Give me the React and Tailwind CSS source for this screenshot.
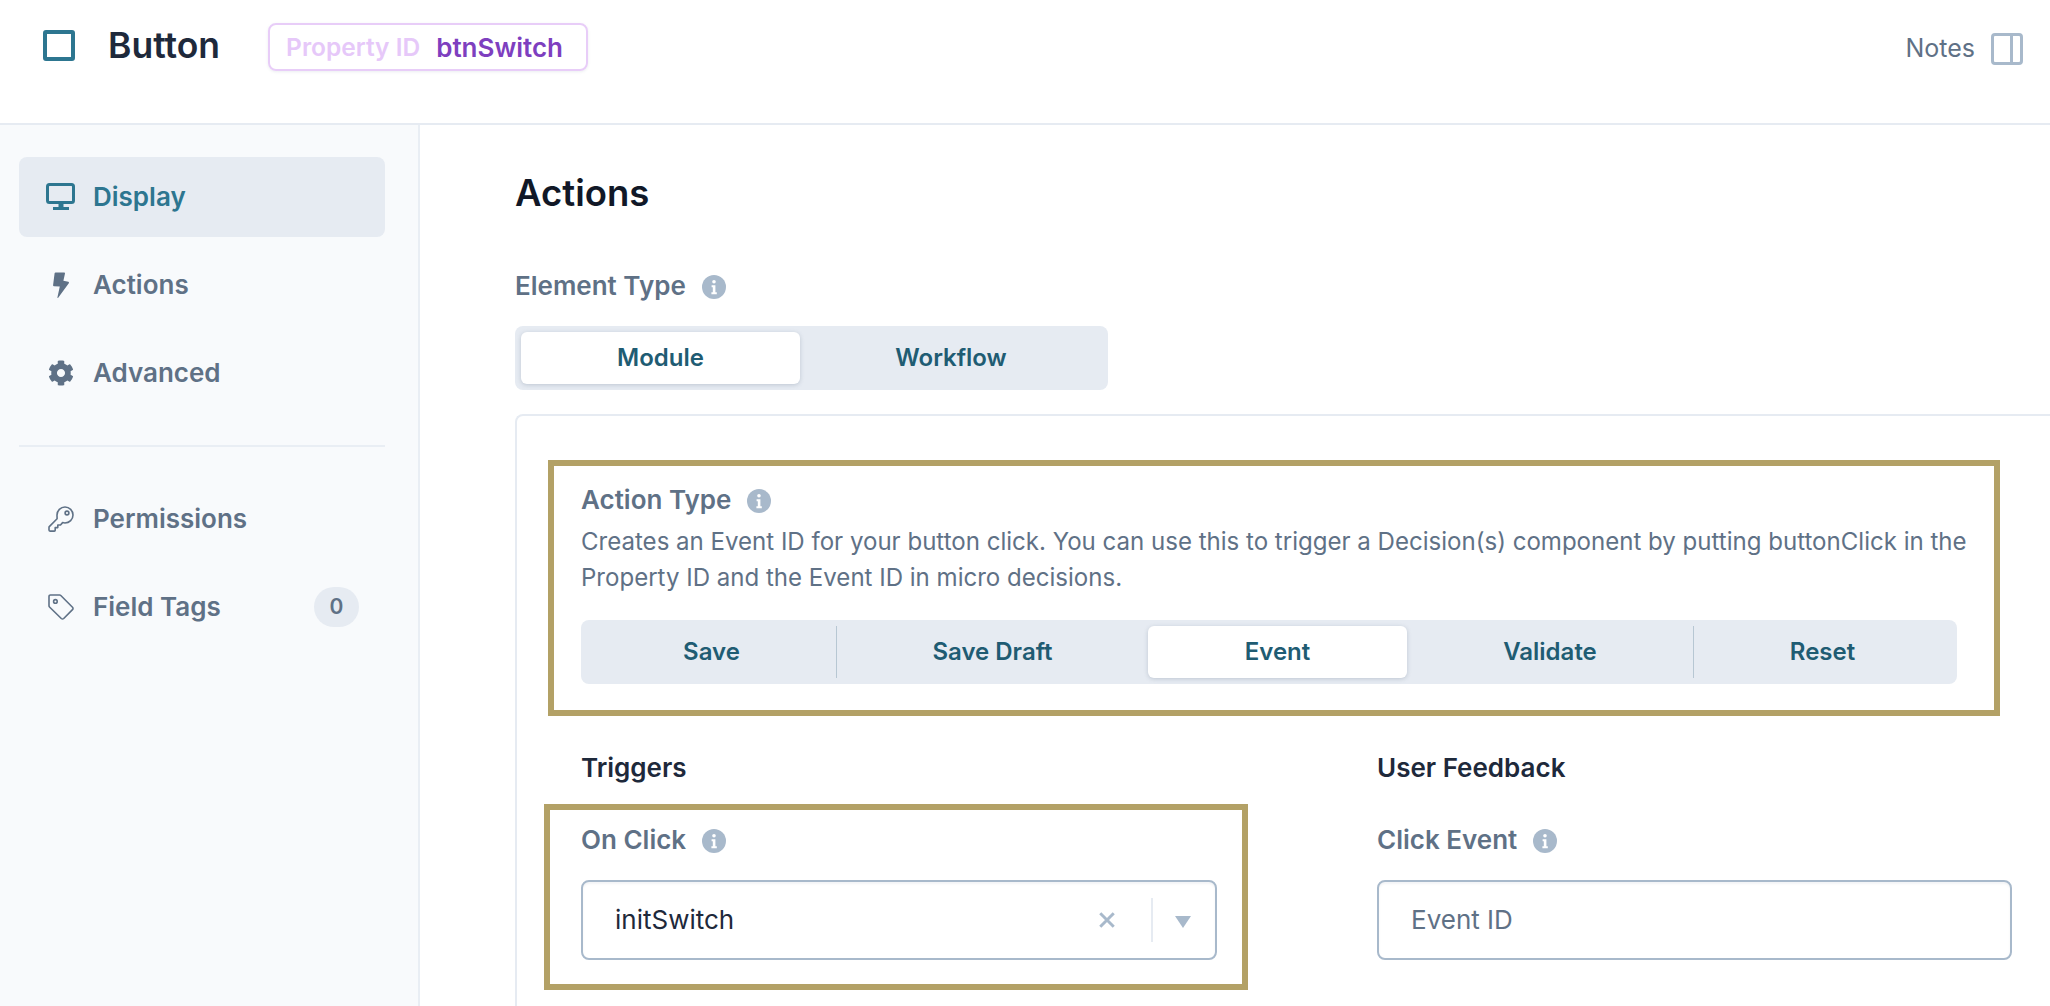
const FONT = "font-['Inter','Liberation_Sans',sans-serif]";

function Info() {
  return (
    <svg viewBox="0 0 24 24" className="w-6 h-6 shrink-0 mt-[2px]">
      <circle cx="12" cy="12" r="12" fill="#a8b9cb" />
      <circle cx="12" cy="6.8" r="1.8" fill="#fff" />
      <path d="M9.6 10.2h3.8v7h1.4v2H9.4v-2h1.4v-5H9.6z" fill="#fff" />
    </svg>
  );
}

function Monitor() {
  return (
    <svg viewBox="0 0 30 28" className="w-[30px] h-[28px]" fill="none" stroke="#2d7690">
      <rect x="1.5" y="1.5" width="26" height="18" rx="2" strokeWidth="3" />
      <path d="M15 20v5" strokeWidth="5" />
      <path d="M7 25.5h16" strokeWidth="3" />
    </svg>
  );
}

function Bolt() {
  return (
    <svg viewBox="0 0 16 26" className="w-[16px] h-[26px]" fill="#5f7186">
      <path d="M2.6 0.4h8.4c.7 0 1.1.5 1 1.2L10.4 8.8l4.9 1c.6.1.9.8.5 1.4L5.2 25.8c-.3.4-.9.2-.8-.3L6.8 14.6 1 14.2c-.7 0-1-.5-.9-1.1L1.6 1.2c.1-.5.5-.8 1-.8z" />
    </svg>
  );
}

function Gear() {
  return (
    <svg viewBox="0 0 512 512" className="w-[26px] h-[26px]" fill="#5f7186">
      <path d="M487.4 315.7l-42.6-24.6c4.3-23.2 4.3-47 0-70.2l42.6-24.6c4.9-2.8 7.1-8.6 5.5-14-11.1-35.6-30-67.8-54.7-94.6-3.8-4.1-10-5.1-14.8-2.3L380.8 110c-17.9-15.4-38.5-27.3-60.8-35.1V25.8c0-5.6-3.9-10.5-9.4-11.7-36.7-8.2-74.3-7.8-109.2 0-5.5 1.2-9.4 6.1-9.4 11.7V75c-22.2 7.9-42.8 19.8-60.8 35.1L88.7 85.5c-4.9-2.8-11-1.9-14.8 2.3-24.7 26.7-43.6 58.9-54.7 94.6-1.7 5.4.6 11.2 5.5 14L67.3 221c-4.3 23.2-4.3 47 0 70.2l-42.6 24.6c-4.9 2.8-7.1 8.6-5.5 14 11.1 35.6 30 67.8 54.7 94.6 3.8 4.1 10 5.1 14.8 2.3l42.6-24.6c17.9 15.4 38.5 27.3 60.8 35.1v49.2c0 5.6 3.9 10.5 9.4 11.7 36.7 8.2 74.3 7.8 109.2 0 5.5-1.2 9.4-6.1 9.4-11.7v-49.2c22.2-7.9 42.8-19.8 60.8-35.1l42.6 24.6c4.9 2.8 11 1.9 14.8-2.3 24.7-26.7 43.6-58.9 54.7-94.6 1.5-5.5-.7-11.3-5.6-14.1zM256 336c-44.1 0-80-35.9-80-80s35.9-80 80-80 80 35.9 80 80-35.9 80-80 80z" />
    </svg>
  );
}

function Key() {
  return (
    <svg viewBox="0 0 26 26" className="w-[26px] h-[26px]" fill="none" stroke="#5f7186" strokeWidth="1.6" strokeLinejoin="round">
      <path d="M17 1c4.4 0 8 3.6 8 8s-3.6 8-8 8c-.8 0-1.6-.1-2.4-.4l-2.1 2.4H9.8v2.6H7.2v2.6c0 .5-.4.9-.9.9H2c-.5 0-1-.4-1-1v-2.8c0-.3.1-.5.3-.7l7.8-7.8C9.1 11 9 10 9 9c0-4.4 3.6-8 8-8z" />
      <circle cx="19" cy="7" r="1.9" />
    </svg>
  );
}

function Tag() {
  return (
    <svg viewBox="0 0 26 26" className="w-[26px] h-[26px]" fill="none" stroke="#5f7186" strokeWidth="1.6" strokeLinejoin="round">
      <path d="M2.4 1h9.2c.5 0 .9.2 1.2.5l11.7 11.7c.7.7.7 1.7 0 2.4l-8.8 8.9c-.7.6-1.7.6-2.4 0L1.5 13c-.3-.3-.5-.7-.5-1.2V2.4C1 1.6 1.6 1 2.4 1z" />
      <circle cx="7.4" cy="7.4" r="1.8" />
    </svg>
  );
}

function NavItem({ icon, label, active, badge }) {
  return (
    <div className={`flex items-center h-[80px] rounded-lg pl-[27px] ${active ? "bg-[#e6ebf2]" : ""}`}>
      <span className="w-[30px] flex justify-center">{icon}</span>
      <span className={`ml-[17px] text-[26px] leading-[32px] font-semibold ${active ? "text-[#2d7690]" : "text-[#5f7186]"}`}>{label}</span>
      {badge && (
        <span className="ml-auto mr-[26px] w-[45px] h-[40px] rounded-full bg-[#e6ebf2] flex items-center justify-center text-[21px] font-semibold text-[#5f7186]">
          {badge}
        </span>
      )}
    </div>
  );
}

function Label({ children }) {
  return (
    <div className="flex items-center h-[32px] gap-[16px]">
      <span className="text-[26px] leading-[32px] font-semibold text-[#5f7186]">{children}</span>
      <Info />
    </div>
  );
}

function Seg({ width, active, divider, children }) {
  return (
    <div
      className={`flex items-center justify-center h-[52px] text-[24px] font-semibold text-[#1f5c73] ${width} ${
        active ? "bg-white rounded-md shadow-[0_1px_4px_rgba(100,116,139,0.3)]" : ""
      } ${divider ? "border-r border-[#b7c7d3]" : ""}`}
    >
      {children}
    </div>
  );
}

export default function App() {
  return (
    <div className={`w-[2050px] h-[1006px] overflow-hidden bg-white flex flex-col ${FONT}`}>
      <header className="h-[125px] shrink-0 border-b-2 border-[#e6ebf2] flex items-start pt-[23px] pl-[43px] pr-[27px]">
        <div className="mt-[7px] w-[32px] h-[31px] border-[4px] border-[#2d7690] rounded-[3px]" />
        <span className="ml-[33px] mt-[1px] text-[35.5px] leading-[44px] font-semibold text-[#1e293b]">Button</span>
        <div className="ml-[48px] h-[48px] w-[320px] rounded-lg border-2 border-[#e8cdf8] flex items-center pl-[16px] font-semibold shadow-[0_1px_3px_rgba(100,116,139,0.12)]">
          <span className="text-[24.5px] text-[#e6c8f9]">Property ID</span>
          <span className="ml-[16px] text-[26px] text-[#7e3fbf]">btnSwitch</span>
        </div>
        <div className="ml-auto mt-[7px] flex items-center">
          <span className="text-[25px] text-[#5f7186]">Notes</span>
          <div className="ml-[16px] w-[32px] h-[32px] rounded-[4px] border-[3px] border-[#a8b9cb] flex justify-end">
            <div className="w-[10px] h-full border-l-[3px] border-[#a8b9cb]" />
          </div>
        </div>
      </header>

      <div className="flex flex-1 min-h-0">
        <aside className="w-[420px] shrink-0 bg-[#f8fafc] border-r-2 border-[#e9eef4] pt-[32px] px-[19px] pr-[33px]">
          <NavItem active icon={<Monitor />} label="Display" />
          <div className="mt-[8px]">
            <NavItem icon={<Bolt />} label="Actions" />
          </div>
          <div className="mt-[8px]">
            <NavItem icon={<Gear />} label="Advanced" />
          </div>
          <div className="mt-[32px] border-t-2 border-[#e9eef4]" />
          <div className="mt-[32px]">
            <NavItem icon={<Key />} label="Permissions" />
          </div>
          <div className="mt-[8px]">
            <NavItem icon={<Tag />} label="Field Tags" badge="0" />
          </div>
        </aside>

        <main className="flex-1 min-w-0 pl-[95px] pt-[44px]">
          <h1 className="text-[36.5px] leading-[48px] font-semibold text-[#111827]">Actions</h1>
          <div className="mt-[53px]">
            <Label>Element Type</Label>
          </div>
          <div className="mt-[24px] w-[593px] h-[64px] rounded-lg bg-[#e6ebf2] flex items-center px-[6px] text-[24px] font-semibold text-[#1f5c73]">
            <div className="w-[279px] h-[52px] rounded-md bg-white shadow-[0_1px_4px_rgba(100,116,139,0.3)] flex items-center justify-center">Module</div>
            <div className="flex-1 flex items-center justify-center">Workflow</div>
          </div>

          <div className="mt-[24px] w-[1600px] rounded-tl-lg border-l-2 border-t-2 border-[#e6ebf2] pl-[31px] pt-[44px] pb-[40px]">
            <section className="w-[1452px] h-[256px] border-[6px] border-[#b3a166] pl-[27px] pt-[18px]">
              <Label>Action Type</Label>
              <p className="mt-[8px] w-[1400px] text-[24.05px] leading-[36px] text-[#5f7186]">
                Creates an Event ID for your button click. You can use this to trigger a Decision(s) component by putting buttonClick in the Property ID and the Event ID in micro decisions.
              </p>
              <div className="mt-[24px] w-[1376px] h-[64px] rounded-lg bg-[#e6ebf2] flex items-center px-[6px]">
                <Seg width="w-[250px]" divider>Save</Seg>
                <Seg width="w-[311px]">Save Draft</Seg>
                <Seg width="w-[259px]" active>Event</Seg>
                <Seg width="w-[287px]" divider>Validate</Seg>
                <Seg width="w-[257px]">Reset</Seg>
              </div>
            </section>

            <div className="mt-[36px] flex -ml-[4px]">
              <div className="w-[704px] shrink-0">
                <h2 className="pl-[37px] h-[32px] leading-[32px] text-[26px] font-semibold text-[#1e293b]">Triggers</h2>
                <div className="mt-[20px] w-[704px] h-[186px] border-[6px] border-[#b3a166] pl-[31px] pt-[14px]">
                  <Label>On Click</Label>
                  <div className="mt-[24px] w-[636px] h-[80px] rounded-lg border-2 border-[#a8b9cb] flex items-center pl-[32px] text-[26px] text-[#1e293b] shadow-[inset_0_2px_2px_rgba(100,116,139,0.08)]">
                    <span className="flex-1 -translate-y-[1px]">initSwitch</span>
                    <svg viewBox="0 0 16 16" className="w-[18px] h-[18px] translate-x-[1px]" fill="none" stroke="#a8b9cb" strokeWidth="2.6">
                      <path d="M2 2l12 12M14 2L2 14" />
                    </svg>
                    <div className="ml-[36px] w-[2px] h-[44px] bg-[#e6ebf2]" />
                    <svg viewBox="0 0 16 12" className="ml-[22px] mr-[24px] mt-[3px] w-4 h-3" fill="#a8b9cb">
                      <path d="M0 0h16L8 12z" />
                    </svg>
                  </div>
                </div>
              </div>
              <div className="ml-[129px] w-[635px] shrink-0">
                <h2 className="h-[32px] leading-[32px] text-[26px] font-semibold text-[#1e293b]">User Feedback</h2>
                <div className="mt-[40px]">
                  <Label>Click Event</Label>
                </div>
                <div className="mt-[24px] h-[80px] rounded-lg border-2 border-[#a8b9cb] flex items-center pl-[32px] text-[26px] text-[#5f7186] shadow-[inset_0_2px_2px_rgba(100,116,139,0.08)]">
                  <span className="-translate-y-[1px]">Event ID</span>
                </div>
              </div>
            </div>
          </div>
        </main>
      </div>
    </div>
  );
}
